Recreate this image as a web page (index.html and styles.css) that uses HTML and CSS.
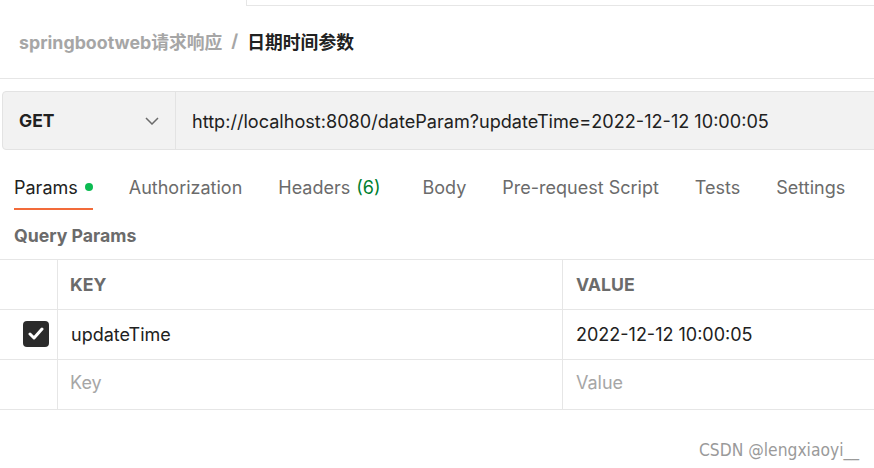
FILE: index.html
```html
<!DOCTYPE html>
<html lang="zh">
<head>
<meta charset="utf-8">
<title>日期时间参数</title>
<link rel="stylesheet" href="styles.css">
</head>
<body>
<div class="page">
  <div class="top-strip"><div class="top-tab"></div></div>
  <div class="breadcrumb">
    <span class="crumb-parent">springbootweb请求响应</span>
    <span class="crumb-sep">/</span>
    <span class="crumb-current">日期时间参数</span>
  </div>
  <div class="request-wrap">
    <div class="request-bar">
      <div class="method">
        <span class="method-name">GET</span>
        <svg class="chevron" width="14" height="8" viewBox="0 0 14 8"><path d="M1 1 L7 7 L13 1" fill="none" stroke="#6b6b6b" stroke-width="1.5"/></svg>
      </div>
      <div class="url">http://localhost:8080/dateParam?updateTime=2022-12-12 10:00:05</div>
    </div>
  </div>
  <div class="tabs">
    <div class="tab active">Params <span class="dot"></span></div>
    <div class="tab">Authorization</div>
    <div class="tab headers">Headers <span class="count">(6)</span></div>
    <div class="tab">Body</div>
    <div class="tab">Pre-request Script</div>
    <div class="tab">Tests</div>
    <div class="tab">Settings</div>
  </div>
  <div class="section-title">Query Params</div>
  <div class="table">
    <div class="row head">
      <div class="cell check"></div>
      <div class="cell key">KEY</div>
      <div class="cell value">VALUE</div>
    </div>
    <div class="row">
      <div class="cell check">
        <span class="checkbox">
          <svg width="16" height="13" viewBox="0 0 16 13"><path d="M2 7 L6 11 L14 2" fill="none" stroke="#fff" stroke-width="3" stroke-linecap="round" stroke-linejoin="round"/></svg>
        </span>
      </div>
      <div class="cell key text">updateTime</div>
      <div class="cell value text">2022-12-12 10:00:05</div>
    </div>
    <div class="row">
      <div class="cell check"></div>
      <div class="cell key placeholder">Key</div>
      <div class="cell value placeholder">Value</div>
    </div>
  </div>
  <div class="watermark">CSDN @lengxiaoyi__</div>
</div>
</body>
</html>
```

FILE: styles.css
```css
html, body {
  margin: 0;
  padding: 0;
  background: #ffffff;
}
.page {
  position: relative;
  width: 874px;
  height: 468px;
  overflow: hidden;
  font-family: Inter, "Noto Sans CJK SC", sans-serif;
  color: #212121;
}
.top-strip {
  height: 6px;
  display: flex;
}
.top-tab {
  margin-left: 246px;
  flex: 1;
  height: 5px;
  border-left: 1px solid #e6e6e6;
  border-bottom: 1px solid #e6e6e6;
}
.breadcrumb {
  height: 73px;
  display: flex;
  align-items: center;
  padding-left: 19px;
  gap: 9px;
  font-size: 17.8px;
  font-weight: 700;
  border-bottom: 1px solid #e6e6e6;
  box-sizing: border-box;
  padding-bottom: 3px;
}
.crumb-parent, .crumb-sep {
  color: #a6a6a6;
}
.crumb-current {
  color: #212121;
}
.request-wrap {
  padding: 12px 0 0 2px;
}
.request-bar {
  display: flex;
  height: 59px;
  width: 900px;
  box-sizing: border-box;
  background: #f2f2f2;
  border: 1px solid #e3e3e3;
  border-radius: 4px;
}
.method {
  width: 173px;
  flex: none;
  box-sizing: border-box;
  border-right: 1px solid #e3e3e3;
  display: flex;
  align-items: center;
  justify-content: space-between;
  padding: 0 16px 0 16px;
}
.method-name {
  font-size: 17.5px;
  font-weight: 700;
  color: #212121;
}
.chevron {
  display: block;
}
.url {
  display: flex;
  align-items: center;
  padding-left: 16px;
  font-size: 18.1px;
  color: #212121;
  white-space: nowrap;
}
.tabs {
  display: flex;
  gap: 36px;
  padding: 14px 0 0 14px;
}
.tab {
  height: 46px;
  box-sizing: border-box;
  display: flex;
  align-items: center;
  gap: 7px;
  padding-top: 2px;
  font-size: 18px;
  color: #6b6b6b;
  border-bottom: 2px solid transparent;
  white-space: nowrap;
}
.tab.active {
  color: #212121;
  border-bottom-color: #f26b3a;
}
.tab.headers {
  margin-right: 6px;
}
.dot {
  width: 8px;
  height: 8px;
  border-radius: 50%;
  background: #0cbb52;
  display: inline-block;
}
.count {
  color: #007f31;
  margin-left: -1px;
}
.section-title {
  height: 49px;
  display: flex;
  align-items: center;
  padding-left: 14px;
  padding-top: 2px;
  box-sizing: border-box;
  font-size: 17.7px;
  font-weight: 700;
  color: #6b6b6b;
}
.table {
  border-top: 1px solid #e6e6e6;
}
.row {
  display: flex;
  height: 50px;
  box-sizing: border-box;
  border-bottom: 1px solid #e6e6e6;
}
.cell {
  display: flex;
  align-items: center;
  box-sizing: border-box;
  padding-bottom: 1px;
}
.cell.check {
  width: 58px;
  flex: none;
  border-right: 1px solid #e6e6e6;
  justify-content: flex-start;
  padding-left: 23px;
  padding-bottom: 2px;
}
.cell.key {
  width: 505px;
  flex: none;
  border-right: 1px solid #e6e6e6;
  padding-left: 12px;
}
.cell.value {
  flex: 1;
  padding-left: 13px;
}
.row.head .cell {
  font-size: 17.7px;
  font-weight: 700;
  color: #6b6b6b;
}
.cell.text {
  font-size: 18px;
  color: #212121;
}
.cell.key.text {
  padding-left: 13px;
}
.cell.placeholder {
  font-size: 18px;
  color: #a6a6a6;
  padding-bottom: 5px;
}
.checkbox {
  width: 26px;
  height: 26px;
  border-radius: 4px;
  background: #2b2b2b;
  display: flex;
  align-items: center;
  justify-content: center;
}
.checkbox svg {
  display: block;
}
.watermark {
  position: absolute;
  right: 15px;
  bottom: 8px;
  font-family: "DejaVu Sans Condensed", "Liberation Sans", sans-serif;
  font-size: 17.3px;
  color: #9a9a9a;
}
```
